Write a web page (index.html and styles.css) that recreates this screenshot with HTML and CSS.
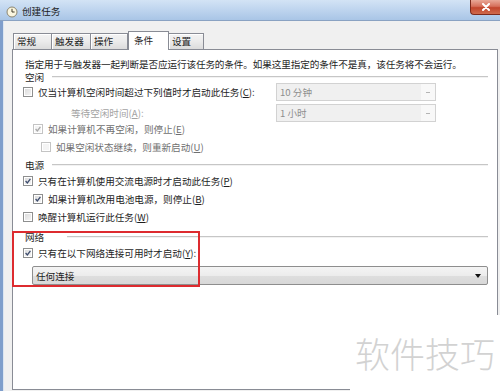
FILE: index.html
```html
<!DOCTYPE html>
<html lang="zh-CN">
<head>
  <meta charset="UTF-8" />
  <meta name="viewport" content="width=device-width, initial-scale=1" />
  <title>创建任务</title>
  <link rel="stylesheet" href="styles.css">
</head>
<body>

  <div class="window">
    <!-- Barra de título -->
    <header class="titlebar">
      <svg class="app-icon" width="12" height="12" viewBox="0 0 12 12">
        <circle cx="6" cy="6" r="5" fill="#fbf6df" stroke="#8c8670" stroke-width="1" />
        <path d="M6 2.8 V6 H8.6" fill="none" stroke="#3f3a2a" stroke-width="1" />
      </svg>
      <span class="title">创建任务</span>
      <button class="close" aria-label="关闭">
        <svg width="10" height="8" viewBox="0 0 10 8">
          <path d="M2 1 L8 7 M8 1 L2 7" stroke="#fff" stroke-width="2" stroke-linecap="round" />
        </svg>
      </button>
    </header>

    <div class="client">
      <nav class="tabs">
        <div class="tab">常规</div>
        <div class="tab">触发器</div>
        <div class="tab">操作</div>
        <div class="tab active">条件</div>
        <div class="tab">设置</div>
      </nav>

      <section class="panel">
        <p class="desc">指定用于与触发器一起判断是否应运行该任务的条件。如果这里指定的条件不是真，该任务将不会运行。</p>

        <div class="group-title">空闲</div>
        <div class="row with-combo">
          <label class="check"><span class="cb"></span>仅当计算机空闲时间超过下列值时才启动此任务(<u>C</u>):</label>
          <div class="combo disabled"><span>10 分钟</span><i class="arrow"></i></div>
        </div>
        <div class="row with-combo wait">
          <span class="label disabled-text">等待空闲时间(<u>A</u>):</span>
          <div class="combo disabled"><span>1 小时</span><i class="arrow"></i></div>
        </div>
        <div class="row indent1">
          <label class="check dim"><span class="cb off checked"><svg viewBox="0 0 10 10"><path d="M2 5 L4.2 7.4 L8 2.4" /></svg></span>如果计算机不再空闲，则停止(<u>E</u>)</label>
        </div>
        <div class="row indent2">
          <label class="check dim"><span class="cb off"></span>如果空闲状态继续，则重新启动(<u>U</u>)</label>
        </div>

        <div class="group-title">电源</div>
        <div class="row">
          <label class="check"><span class="cb checked"><svg viewBox="0 0 10 10"><path d="M2 5 L4.2 7.4 L8 2.4" /></svg></span>只有在计算机使用交流电源时才启动此任务(<u>P</u>)</label>
        </div>
        <div class="row indent1">
          <label class="check"><span class="cb checked"><svg viewBox="0 0 10 10"><path d="M2 5 L4.2 7.4 L8 2.4" /></svg></span>如果计算机改用电池电源，则停止(<u>B</u>)</label>
        </div>
        <div class="row">
          <label class="check"><span class="cb"></span>唤醒计算机运行此任务(<u>W</u>)</label>
        </div>

        <div class="group-title net">网络</div>
        <div class="row">
          <label class="check"><span class="cb checked"><svg viewBox="0 0 10 10"><path d="M2 5 L4.2 7.4 L8 2.4" /></svg></span>只有在以下网络连接可用时才启动(<u>Y</u>):</label>
        </div>
        <div class="combo wide"><span>任何连接</span><i class="arrow"></i></div>

        <!-- destaque vermelho -->
        <div class="highlight"></div>
      </section>
    </div>
  </div>

  <div class="watermark">软件技巧</div>

</body>
</html>
```

FILE: styles.css
```css
/* Reset básico */
* {
  margin: 0;
  padding: 0;
  box-sizing: border-box;
  font-family: "Noto Sans CJK SC", "Microsoft YaHei", sans-serif;
}

body {
  width: 500px;
  height: 391px;
  overflow: hidden;
  position: relative;
  background: #f0f0f0;
  color: #1e1e1e;
  font-size: 9.6px;
}

.window {
  display: flex;
  flex-direction: column;
  height: 391px;
}

/* Barra de título */
.titlebar {
  height: 21px;
  display: flex;
  align-items: flex-start;
  background: linear-gradient(to bottom, #d3e3f5 0%, #c0d6ef 45%, #a9c5e6 100%);
  border-bottom: 1px solid #8aa2c2;
}

.app-icon {
  margin: 6px 0 0 6px;
}

.title {
  margin: 5px 0 0 4px;
  line-height: 12px;
  color: #1b1b1b;
}

.close {
  margin-left: auto;
  width: 30px;
  height: 15px;
  border: 1px solid #7d2a1c;
  border-top: none;
  border-right: none;
  border-radius: 0 0 0 4px;
  background: linear-gradient(to bottom, #e9a897 0%, #d6705b 45%, #c2452c 55%, #cf6a4c 100%);
  display: flex;
  align-items: center;
  justify-content: center;
}

/* Área do cliente */
.client {
  flex: 1;
  display: flex;
  flex-direction: column;
  border-left: 3px solid #7f9ecb;
  box-shadow: inset 1px 0 0 #dbe5f1;
  padding: 10px 2px 1px 9px;
}

.tabs {
  display: flex;
  align-items: flex-end;
  height: 19px;
  margin: 0 0 -1px 1px;
  position: relative;
  z-index: 2;
}

.tab {
  height: 16px;
  margin-bottom: 1px;
  padding-left: 3px;
  line-height: 15px;
  border: 1px solid #898c95;
  border-bottom: none;
  background: linear-gradient(to bottom, #f3f3f3 0%, #ebebeb 50%, #dcdcdc 100%);
  box-shadow: inset 1px 1px 0 #fff;
}

.tab:nth-child(1) { width: 39px; }
.tab:nth-child(2) { width: 39px; border-left: none; }
.tab:nth-child(3) { width: 37px; border-left: none; }
.tab:nth-child(5) { width: 35px; border-left: none; }

.tab.active {
  width: 41px;
  height: 19px;
  margin-bottom: 0;
  padding-left: 5px;
  line-height: 17px;
  background: #fff;
  box-shadow: none;
}

/* Painel branco */
.panel {
  flex: 1;
  position: relative;
  background: #fff;
  border: 1px solid #898c95;
  padding: 7px 9px 0 10px;
  display: flex;
  flex-direction: column;
}

.desc {
  height: 14px;
  line-height: 14px;
  padding-left: 2px;
  white-space: nowrap;
  letter-spacing: -0.1px;
}

.group-title {
  height: 12px;
  margin-top: 5px;
  padding-left: 2px;
  display: flex;
  align-items: center;
  white-space: nowrap;
}

.group-title::after {
  content: "";
  flex: 1;
  margin-left: 8px;
  border-top: 1px solid #c6c6c6;
  border-bottom: 1px solid #f2f2f2;
}

.desc + .group-title { margin-top: 0; }
.group-title.net { margin-top: 7px; }
.group-title.net::after { margin-left: 23px; }

.row {
  height: 14px;
  margin-top: 4px;
  display: flex;
  align-items: center;
  white-space: nowrap;
}

.group-title + .row { margin-top: 3px; }
.group-title + .with-combo { margin-top: 0; }

.row.with-combo {
  height: 18px;
  display: grid;
  grid-template-columns: 253px 160px;
  align-items: center;
}

.row.wait { margin-top: 3px; }
.wait + .row { margin-top: 0; }

.indent1 { padding-left: 10px; }
.indent2 { padding-left: 18px; }

.label { padding-left: 48px; }

.disabled-text { color: #a3a3a3; }

.check {
  display: flex;
  align-items: center;
}

.check.dim { color: #6f6f6f; }

u {
  text-decoration: underline;
  text-underline-offset: 1px;
}

/* Caixas de seleção */
.cb {
  width: 10px;
  height: 10px;
  margin-right: 5px;
  border: 1px solid #8e8f8f;
  background: linear-gradient(135deg, #d9d9d9 0%, #f7f7f7 100%);
  box-shadow: inset 0 0 0 1px #fff;
  display: flex;
}

.cb svg {
  width: 8px;
  height: 8px;
}

.cb svg path {
  fill: none;
  stroke: #3d4c6e;
  stroke-width: 1.6;
}

.cb.off {
  border-color: #c4c4c4;
  background: #f4f4f4;
}

.cb.off svg path { stroke: #a8a8a8; }

/* Listas suspensas */
.combo {
  height: 18px;
  display: flex;
  align-items: center;
  padding-left: 3px;
  border: 1px solid #d2d2d2;
  background: #f0f0f0;
}

.combo span { flex: 1; }

.combo.disabled { color: #8e8e8e; }

.combo.disabled .arrow {
  width: 14px;
  height: 16px;
  background: #f8f8f8 linear-gradient(#b4b4b4, #b4b4b4) no-repeat 5px 8px / 4px 1px;
}

.combo.wide {
  height: 19px;
  margin: 6px 0 0 9px;
  padding-left: 3px;
  border: 1px solid #8e8e8e;
  border-radius: 2px;
  background: linear-gradient(to bottom, #f4f4f4 0%, #ececec 50%, #dedede 51%, #d8d8d8 100%);
  color: #1e1e1e;
}

.combo.wide .arrow {
  width: 0;
  height: 0;
  margin-right: 6px;
  border-left: 3px solid transparent;
  border-right: 3px solid transparent;
  border-top: 4px solid #111;
}

/* Destaque em vermelho */
.highlight {
  position: absolute;
  left: -1px;
  top: 181px;
  width: 188px;
  height: 56px;
  border: 2px solid #dd2b2f;
}

/* Marca d'água */
.watermark {
  position: absolute;
  left: 350px;
  top: 315px;
  width: 150px;
  height: 76px;
  background: #fff;
  color: #d2d2d2;
  font-size: 35px;
  font-weight: 300;
  line-height: 76px;
  text-align: center;
  letter-spacing: 0;
}
```
